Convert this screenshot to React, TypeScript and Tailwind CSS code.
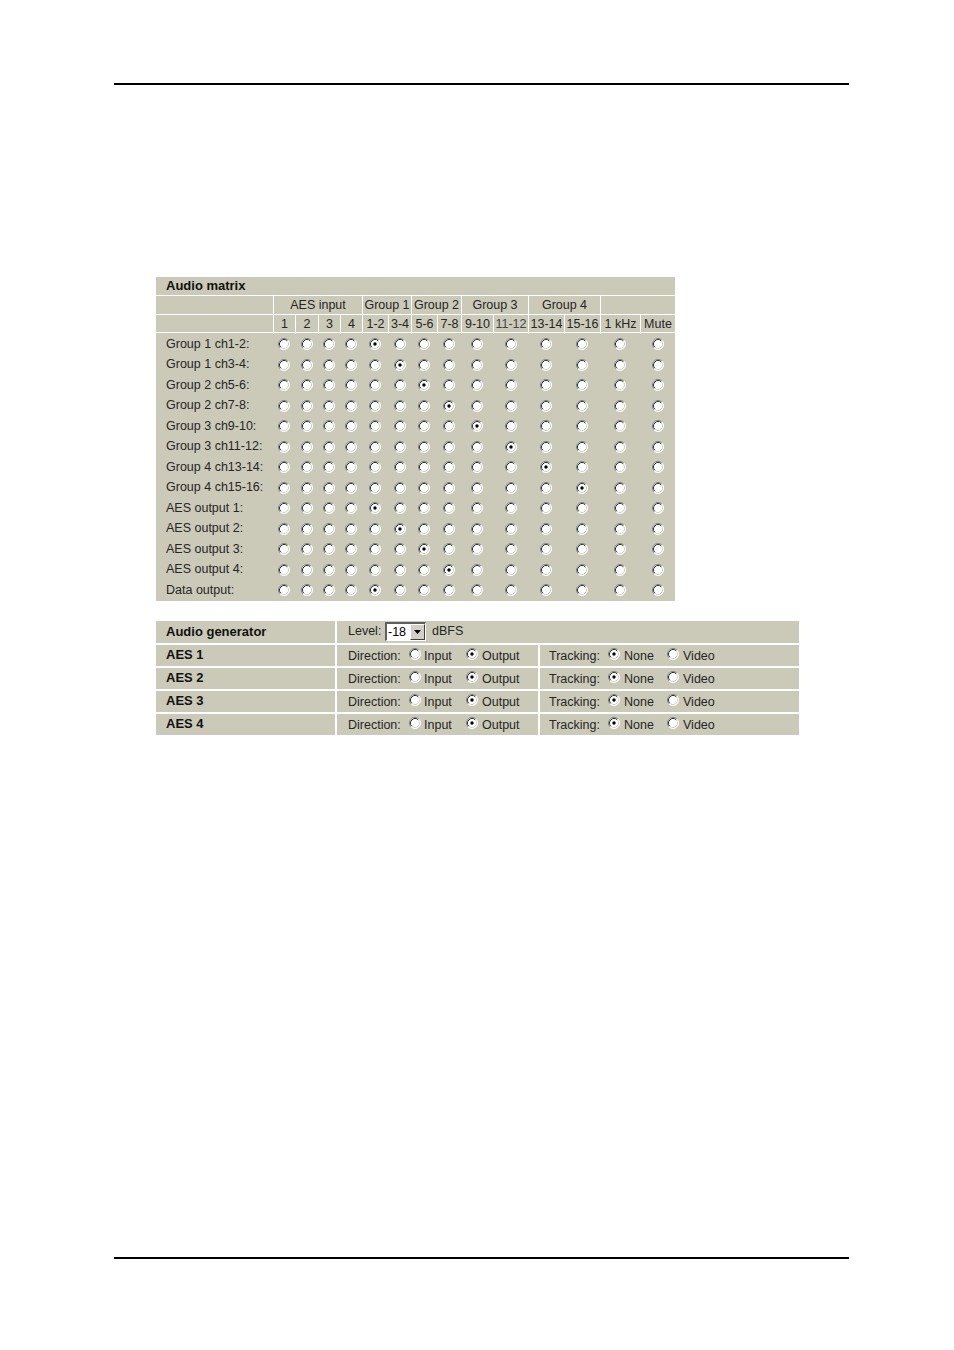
import React from "react";

function Radio({ checked = false, className = "" }: { checked?: boolean; className?: string }) {
  return (
    <svg width="12" height="12" viewBox="0 0 12 12" className={"block shrink-0 " + className}>
      <circle cx="6" cy="6" r="5.5" fill="#ffffff" />
      <path d="M2.11 9.89A5.5 5.5 0 0 1 9.89 2.11" stroke="#808080" strokeWidth="1" fill="none" />
      <path d="M9.89 2.11A5.5 5.5 0 0 1 2.11 9.89" stroke="#ffffff" strokeWidth="1" fill="none" />
      <path d="M2.82 9.18A4.5 4.5 0 0 1 9.18 2.82" stroke="#303030" strokeWidth="1" fill="none" />
      <path d="M9.18 2.82A4.5 4.5 0 0 1 2.82 9.18" stroke="#d4d0c8" strokeWidth="1" fill="none" />
      {checked && <circle cx="6" cy="6" r="1.7" fill="#000000" />}
    </svg>
  );
}

const rows: { label: string; sel: number }[] = [
  { label: "Group 1 ch1-2:", sel: 4 },
  { label: "Group 1 ch3-4:", sel: 5 },
  { label: "Group 2 ch5-6:", sel: 6 },
  { label: "Group 2 ch7-8:", sel: 7 },
  { label: "Group 3 ch9-10:", sel: 8 },
  { label: "Group 3 ch11-12:", sel: 9 },
  { label: "Group 4 ch13-14:", sel: 10 },
  { label: "Group 4 ch15-16:", sel: 11 },
  { label: "AES output 1:", sel: 4 },
  { label: "AES output 2:", sel: 5 },
  { label: "AES output 3:", sel: 6 },
  { label: "AES output 4:", sel: 7 },
  { label: "Data output:", sel: 4 },
];

const subHeads = ["1", "2", "3", "4", "1-2", "3-4", "5-6", "7-8", "9-10", "11-12", "13-14", "15-16", "1 kHz", "Mute"];

const gridCls =
  "grid grid-cols-[117px_22px_23px_22px_22px_26px_23px_26px_24px_32px_35px_36px_36px_40px_35px]";

function AudioMatrix() {
  return (
    <div className="ml-[156px] mt-[192px] w-[519px] bg-[#cbcab8] text-[12.5px] text-[#262626]">
      <div className="h-[18px] pl-[10px] flex items-center font-bold text-[13px] text-[#111]">Audio matrix</div>
      <div className={gridCls + " h-[19px] border-t border-white"}>
        <div />
        <div className="col-span-4 border-l border-white flex items-center justify-center">AES input</div>
        <div className="col-span-2 border-l border-white flex items-center justify-center whitespace-nowrap">Group 1</div>
        <div className="col-span-2 border-l border-white flex items-center justify-center whitespace-nowrap">Group 2</div>
        <div className="col-span-2 border-l border-white flex items-center justify-center whitespace-nowrap">Group 3</div>
        <div className="col-span-2 border-l border-white flex items-center justify-center whitespace-nowrap">Group 4</div>
        <div className="col-span-2 border-l border-white" />
      </div>
      <div className={gridCls + " h-[19px] border-t border-b border-white"}>
        <div />
        {subHeads.map((h, i) => (
          <div
            key={h}
            className={
              "border-l border-white flex items-center justify-center whitespace-nowrap " +
              (i === 9 ? "text-[#454545]" : "")
            }
          >
            {h}
          </div>
        ))}
      </div>
      <div className="pt-[1px]">
        {rows.map((r) => (
          <div key={r.label} className={gridCls + " h-[20.5px]"}>
            <div className="pl-[10px] flex items-center whitespace-nowrap">{r.label}</div>
            {subHeads.map((h, i) => (
              <div key={h} className="flex items-center justify-center">
                <Radio checked={i === r.sel} />
              </div>
            ))}
          </div>
        ))}
      </div>
    </div>
  );
}

function Select() {
  return (
    <div className="w-[41px] h-[19px] flex border-t-2 border-l-2 border-t-[#606060] border-l-[#606060] border-b border-r border-b-white border-r-white bg-white">
      <div className="flex-1 flex items-center pl-[1px] text-[12.5px] text-black leading-none">-18</div>
      <div className="w-[15px] h-full bg-[#d4d0c8] border-t border-l border-t-white border-l-white border-b border-r border-b-[#404040] border-r-[#404040] flex items-center justify-center">
        <svg width="7" height="4" viewBox="0 0 7 4">
          <path d="M0 0H7L3.5 4Z" fill="#000" />
        </svg>
      </div>
    </div>
  );
}

function AudioGenerator() {
  const aes = ["AES 1", "AES 2", "AES 3", "AES 4"];
  return (
    <div className="ml-[156px] mt-[20px] w-[643px] grid grid-cols-[179px_201px_259px] gap-[2px] text-[12.5px] text-[#262626]">
      <div className="h-[22px] bg-[#cbcab8] pl-[10px] flex items-center font-bold text-[13px] text-[#111]">
        Audio generator
      </div>
      <div className="col-span-2 h-[22px] bg-[#cbcab8] pl-[11px] flex items-center">
        <span className="w-[37px]">Level:</span>
        <Select />
        <span className="ml-[6px]">dBFS</span>
      </div>
      {aes.map((a) => (
        <React.Fragment key={a}>
          <div className="h-[21px] bg-[#cbcab8] pl-[10px] flex items-center font-bold text-[13px] text-[#111]">{a}</div>
          <div className="h-[21px] bg-[#cbcab8] pl-[11px] flex items-center whitespace-nowrap pt-[2px]">
            <span className="w-[61px]">Direction:</span>
            <Radio className="mb-[4px]" />
            <span className="w-[45px] pl-[3px]">Input</span>
            <Radio checked className="mb-[4px]" />
            <span className="pl-[4px]">Output</span>
          </div>
          <div className="h-[21px] bg-[#cbcab8] pl-[9px] flex items-center whitespace-nowrap pt-[2px]">
            <span className="w-[59px]">Tracking:</span>
            <Radio checked className="mb-[4px]" />
            <span className="w-[47px] pl-[4px]">None</span>
            <Radio className="mb-[4px]" />
            <span className="pl-[4px]">Video</span>
          </div>
        </React.Fragment>
      ))}
    </div>
  );
}

export default function App() {
  return (
    <div className="w-[954px] h-[1350px] bg-white overflow-hidden font-['Liberation_Sans',Arial,sans-serif]">
      <div className="pt-[83px] pl-[114px]">
        <div className="w-[735px] h-[2px] bg-black" />
      </div>
      <AudioMatrix />
      <AudioGenerator />
      <div className="mt-[522px] pl-[114px]">
        <div className="w-[735px] h-[2px] bg-black" />
      </div>
    </div>
  );
}
